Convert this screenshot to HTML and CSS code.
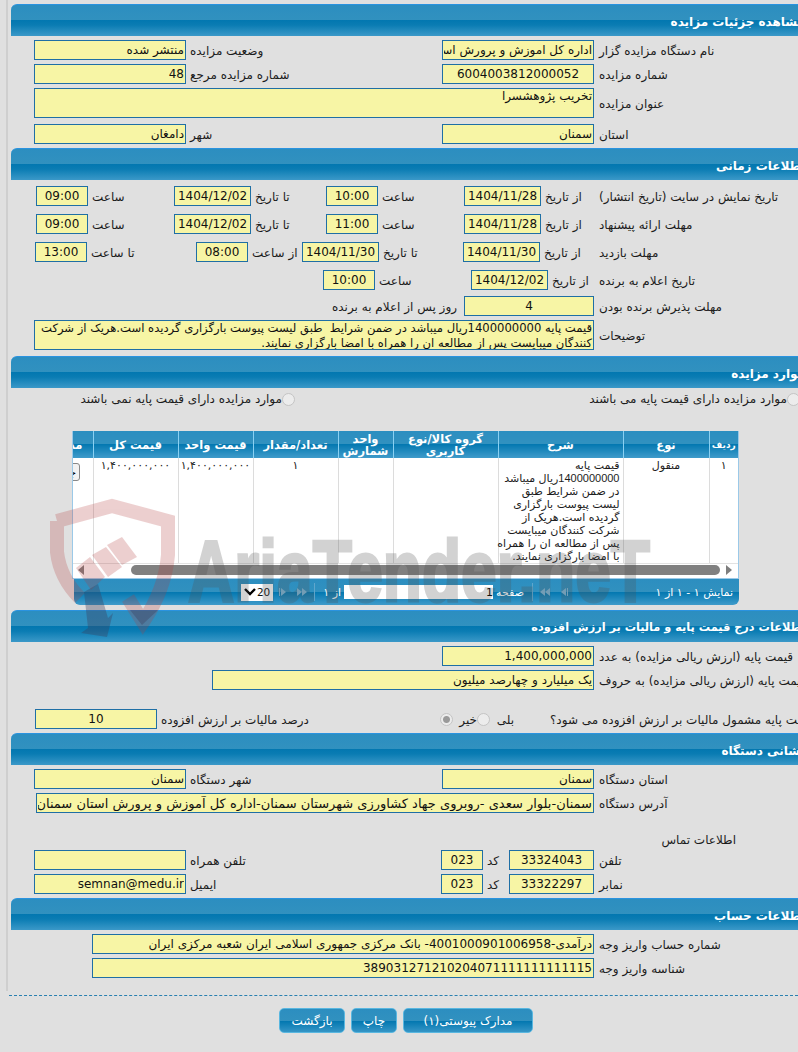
FILE: index.html
```html
<!DOCTYPE html>
<html lang="fa">
<head>
    <meta charset="UTF-8">
    <title>مشاهده جزئیات مزایده</title>
    <link rel="stylesheet" href="styles.css">
</head>
<body>
    <div class="page">
        <div class="section-title">مشاهده جزئیات مزایده</div>
        <div class="section-body">
            <div class="row">
                <label class="lbl main">نام دستگاه مزایده گزار</label>
                <input class="fld w152" readonly value="اداره کل اموزش و پرورش استان سمنان">
                <label class="lbl w256">وضعیت مزایده</label>
                <input class="fld w152" readonly value="منتشر شده">
            </div>
            <div class="row">
                <label class="lbl main">شماره مزایده</label>
                <input class="fld w152 c" readonly value="6004003812000052">
                <label class="lbl w256">شماره مزایده مرجع</label>
                <input class="fld w152" readonly value="48">
            </div>
            <div class="row with-area">
                <label class="lbl main">عنوان مزایده</label>
                <textarea class="fld area w560" readonly>تخریب پژوهشسرا</textarea>
            </div>
            <div class="row">
                <label class="lbl main">استان</label>
                <input class="fld w152" readonly value="سمنان">
                <label class="lbl w256">شهر</label>
                <input class="fld w152" readonly value="دامغان">
            </div>
        </div>

        <div class="section-title">اطلاعات زمانی</div>
        <div class="section-body time">
            <div class="row">
                <label class="lbl main">تاریخ نمایش در سایت (تاریخ انتشار)</label>
                <label class="lbl w53">از تاریخ</label>
                <input class="fld date c" readonly value="1404/11/28">
                <label class="lbl w86">ساعت</label>
                <input class="fld hour c" readonly value="10:00">
                <label class="lbl w75">تا تاریخ</label>
                <input class="fld date c" readonly value="1404/12/02">
                <label class="lbl w86">ساعت</label>
                <input class="fld hour c" readonly value="09:00">
            </div>
            <div class="row">
                <label class="lbl main">مهلت ارائه پیشنهاد</label>
                <label class="lbl w53">از تاریخ</label>
                <input class="fld date c" readonly value="1404/11/28">
                <label class="lbl w86">ساعت</label>
                <input class="fld hour c" readonly value="11:00">
                <label class="lbl w75">تا تاریخ</label>
                <input class="fld date c" readonly value="1404/12/02">
                <label class="lbl w86">ساعت</label>
                <input class="fld hour c" readonly value="09:00">
            </div>
            <div class="row">
                <label class="lbl main">مهلت بازدید</label>
                <label class="lbl w54">از تاریخ</label>
                <input class="fld date c" readonly value="1404/11/30">
                <label class="lbl w84">تا تاریخ</label>
                <input class="fld date c" readonly value="1404/11/30">
                <label class="lbl w54">از ساعت</label>
                <input class="fld hour c" readonly value="08:00">
                <label class="lbl w109">تا ساعت</label>
                <input class="fld hour c" readonly value="13:00">
            </div>
            <div class="row">
                <label class="lbl main">تاریخ اعلام به برنده</label>
                <label class="lbl w46">از تاریخ</label>
                <input class="fld date c" readonly value="1404/12/02">
                <label class="lbl w96">ساعت</label>
                <input class="fld hour c" readonly value="10:00">
            </div>
            <div class="row tight">
                <label class="lbl main">مهلت پذیرش برنده بودن</label>
                <input class="fld w130 c" readonly value="4">
                <span class="note">روز پس از اعلام به برنده</span>
            </div>
            <div class="row with-area">
                <label class="lbl main">توضیحات</label>
                <textarea class="fld area notes w560" readonly>قیمت پایه 1400000000ریال میباشد در ضمن شرایط  طبق لیست پیوست بارگزاری گردیده است.هریک از شرکت
کنندگان میبایست پس از مطالعه ان را همراه با امضا بارگزاری نمایند.</textarea>
            </div>
        </div>

        <div class="section-title">موارد مزایده</div>
        <div class="section-body items">
            <div class="radio-row">
                <div class="radio-item"><span class="radio"></span>موارد مزایده دارای قیمت پایه می باشند</div>
                <div class="radio-item"><span class="radio"></span>موارد مزایده دارای قیمت پایه نمی باشند</div>
            </div>
            <div class="grid-box">
                <table class="grid">
                    <colgroup>
                        <col class="c29"><col class="c86"><col class="c125"><col class="c105"><col class="c55"><col class="c85"><col class="c75"><col class="c85"><col class="c60">
                    </colgroup>
                    <thead>
                        <tr>
                            <th class="first">ردیف</th>
                            <th>نوع</th>
                            <th>شرح</th>
                            <th>گروه کالا/نوع<br>کاربری</th>
                            <th>واحد<br>شمارش</th>
                            <th>تعداد/مقدار</th>
                            <th>قیمت واحد</th>
                            <th>قیمت کل</th>
                            <th class="cut">مدارک</th>
                        </tr>
                    </thead>
                    <tbody>
                        <tr>
                            <td>۱</td>
                            <td>منقول</td>
                            <td class="desc">قیمت پایه<br><span class="num">1400000000</span>ریال میباشد<br>در ضمن شرایط  طبق<br>لیست پیوست بارگزاری<br>گردیده است.هریک از<br>شرکت کنندگان میبایست<br>پس از مطالعه ان را همراه<br>با امضا بارگزاری نمایند.</td>
                            <td></td>
                            <td></td>
                            <td>۱</td>
                            <td>۱,۴۰۰,۰۰۰,۰۰۰</td>
                            <td>۱,۴۰۰,۰۰۰,۰۰۰</td>
                            <td class="cut"><button class="mini">جزئیات</button></td>
                        </tr>
                    </tbody>
                </table>
                <div class="scroll-row">
                    <svg class="arrow" width="6" height="10" viewBox="0 0 6 10"><path d="M0 0 L6 5 L0 10 Z"/></svg>
                    <div class="thumb"></div>
                    <svg class="arrow" width="6" height="10" viewBox="0 0 6 10"><path d="M6 0 L0 5 L6 10 Z"/></svg>
                </div>
            </div>
            <div class="pager">
                <span class="pager-info">نمایش ۱ - ۱ از ۱</span>
                <svg class="pg-icons" width="30" height="8" viewBox="0 0 30 8"><path d="M30 0 V8 H29 V0 Z M28 0 V8 L23 4 Z M12 0 V8 L7 4 Z M7 0 V8 L2 4 Z"/></svg>
                <span class="pg-sep"></span>
                <span class="pg-text">صفحه</span>
                <input class="pg-input" readonly value="1">
                <span class="pg-text">از ۱</span>
                <span class="pg-sep"></span>
                <svg class="pg-icons" width="30" height="8" viewBox="0 0 30 8"><path d="M0 0 V8 H1 V0 Z M2 0 V8 L7 4 Z M18 0 V8 L23 4 Z M23 0 V8 L28 4 Z"/></svg>
                <div class="pg-size">
                    <span>20</span>
                    <svg width="12" height="8" viewBox="0 0 12 8"><path d="M1 1 L6 6 L11 1" fill="none" stroke="#000" stroke-width="2.4"/></svg>
                </div>
            </div>
        </div>

        <div class="section-title narrow">اطلاعات درج قیمت پایه و مالیات بر ارزش افزوده</div>
        <div class="section-body price">
            <div class="row">
                <label class="lbl main">قیمت پایه (ارزش ریالی مزایده) به عدد</label>
                <input class="fld w152" readonly value="1,400,000,000">
            </div>
            <div class="row">
                <label class="lbl main">قیمت پایه (ارزش ریالی مزایده) به حروف</label>
                <input class="fld w382" readonly value="یک میلیارد و چهارصد میلیون">
            </div>
            <div class="row tax">
                <label class="lbl w284">قیمت پایه مشمول مالیات بر ارزش افزوده می شود؟</label>
                <div class="tax-options">
                    <span class="opt">بلی</span><span class="radio"></span>
                    <span class="opt">خیر</span><span class="radio on"></span>
                </div>
                <label class="lbl w283">درصد مالیات بر ارزش افزوده</label>
                <input class="fld w122 c" readonly value="10">
            </div>
        </div>

        <div class="section-title">نشانی دستگاه</div>
        <div class="section-body">
            <div class="row">
                <label class="lbl main">استان دستگاه</label>
                <input class="fld w152" readonly value="سمنان">
                <label class="lbl w256">شهر دستگاه</label>
                <input class="fld w152" readonly value="سمنان">
            </div>
            <div class="row">
                <label class="lbl main">آدرس دستگاه</label>
                <input class="fld w558" readonly value="سمنان-بلوار سعدی -روبروی جهاد کشاورزی شهرستان سمنان-اداره کل آموزش و پرورش استان سمنان">
            </div>
            <div class="contact-title">اطلاعات تماس</div>
            <div class="row">
                <label class="lbl main">تلفن</label>
                <input class="fld w85 c" readonly value="33324043">
                <label class="lbl w26">کد</label>
                <input class="fld w42 c" readonly value="023">
                <label class="lbl w255">تلفن همراه</label>
                <input class="fld w152" readonly value="">
            </div>
            <div class="row">
                <label class="lbl main">نمابر</label>
                <input class="fld w85 c" readonly value="33322297">
                <label class="lbl w26">کد</label>
                <input class="fld w42 c" readonly value="023">
                <label class="lbl w255">ایمیل</label>
                <input class="fld w152" readonly value="semnan@medu.ir">
            </div>
        </div>

        <div class="section-title">اطلاعات حساب</div>
        <div class="section-body">
            <div class="row">
                <label class="lbl main">شماره حساب واریز وجه</label>
                <input class="fld w502" readonly value="درآمدی-4001000901006958- بانک مرکزی جمهوری اسلامی ایران شعبه مرکزی ایران">
            </div>
            <div class="row">
                <label class="lbl main">شناسه واریز وجه</label>
                <input class="fld w502" readonly value="389031271210204071111111111115">
            </div>
        </div>
    </div>

    <div class="divider"></div>

    <div class="actions">
        <button class="btn w130">مدارک پیوستی(۱)</button>
        <button class="btn w46b">چاپ</button>
        <button class="btn w66b">بازگشت</button>
    </div>

    <svg class="watermark" width="798" height="1052" viewBox="0 0 798 1052">
        <g class="wm-red">
            <path class="wm-line" d="M57 521 L112 506 L168 521 V555 Q165 590 143 622 L128 598 M57 521 V552 Q60 578 80 598"/>
            <path d="M107 545 L122 537 L137 557 L122 565 Z M92 555 L106 547 L122 567 L108 577 Z M76 568 L90 557 L105 577 L91 590 Z"/>
        </g>
        <g class="wm-blue">
            <path d="M84 592 L98 584 L108 618 L113 613 L107 637 L81 633 L88 628 Z"/>
            <path d="M130 610 L158 610 L142 625 Z"/>
        </g>
        <text class="wm-text" x="188" y="601" textLength="462" lengthAdjust="spacingAndGlyphs">AriaTender.neT</text>
    </svg>
</body>
</html>
```

FILE: styles.css
```css
* {
    margin: 0;
    padding: 0;
    box-sizing: border-box;
}

html, body {
    height: 1052px;
    overflow: hidden;
}

body {
    position: relative;
    background: #e0e0e0;
    font-family: "DejaVu Sans", sans-serif;
    font-size: 12px;
    color: #1c1c1c;
}

.page {
    direction: rtl;
    width: 824px;
    height: 991px;
    margin-left: 6px;
    padding: 4px 0 0 3px;
    border-left: 2px solid #cfcfcf;
}

.section-title {
    height: 32px;
    padding: 5px 25px 0 0;
    line-height: 24px;
    font-weight: bold;
    color: #fff;
    border-top: 1px solid #2a93e0;
    border-top-left-radius: 6px;
    background: linear-gradient(#2c8ec0 0, #3191bf 15px, #0277b0 15px, #0a7cb3 20px, #3f9bca 32px);
}

.section-title.narrow {
    font-size: 11.3px;
}

.section-body {
    padding-top: 4px;
}

.row {
    display: flex;
    align-items: center;
    margin-bottom: 4px;
}

.row.with-area {
    margin-bottom: 6px;
}

.lbl {
    flex: none;
    padding: 2px 0 0 4px;
    text-align: left;
    white-space: nowrap;
}

.lbl.main { width: 236px; padding-left: 5px; }

.w26 { width: 26px; }
.w46 { width: 46px; }
.w53 { width: 53px; }
.w54 { width: 54px; }
.w75 { width: 75px; }
.w84 { width: 84px; }
.w86 { width: 86px; }
.w96 { width: 96px; }
.w109 { width: 109px; }
.w255 { width: 255px; }
.w256 { width: 256px; }
.w283 { width: 283px; }
.w284 { width: 284px; }

.fld {
    flex: none;
    display: block;
    height: 20px;
    border: 1px solid #1f6fa5;
    background: #f7f5a5;
    padding: 0 1px;
    font-family: "DejaVu Sans", sans-serif;
    font-size: 12px;
    color: #111;
    direction: rtl;
    outline: none;
    border-radius: 0;
}

.fld.c { text-align: center; }
.fld.date { width: 77px; padding: 0; }
.fld.hour { width: 52px; }
.fld.w42 { width: 42px; }
.fld.w85 { width: 85px; }
.fld.w122 { width: 122px; }
.fld.w130 { width: 130px; }
.fld.w152 { width: 152px; }
.fld.w382 { width: 382px; }
.fld.w502 { width: 502px; }
.fld.w558 { width: 558px; font-size: 13px; }
.fld.w560 { width: 560px; }

.area {
    height: 30px;
    resize: none;
    overflow: hidden;
    line-height: 15px;
}

.fld.notes {
    font-size: 11.6px;
}

.time { padding-top: 6px; }
.time .row { margin-bottom: 8px; }
.time .row:nth-child(4) { margin-bottom: 6px; }
.time .row.tight { margin-bottom: 4px; }
.time .row.with-area { margin-bottom: 6px; }

.note {
    padding: 2px 7px 0 0;
    white-space: nowrap;
}

.items { height: 222px; }

.radio-row {
    display: flex;
    height: 14px;
    margin-bottom: 25px;
    padding-right: 30px;
}

.radio-item {
    flex: none;
    display: flex;
    align-items: center;
    width: 505px;
    white-space: nowrap;
}

.radio {
    flex: none;
    display: block;
    width: 13px;
    height: 13px;
    border: 1px solid #c4c4c4;
    border-radius: 50%;
    background: #ececec;
}

.radio.on {
    background: radial-gradient(circle, #9a9a9a 0, #9a9a9a 3px, #ececec 4px);
}

.grid-box {
    width: 667px;
    height: 148px;
    margin-right: 91px;
    border: 1px solid #9bc9e8;
    border-top: 0;
    background: #fff;
    overflow: hidden;
}

.grid {
    table-layout: fixed;
    width: 705px;
    border-collapse: collapse;
}

.c29 { width: 29px; }
.c55 { width: 55px; }
.c60 { width: 60px; }
.c75 { width: 75px; }
.c85 { width: 85px; }
.c86 { width: 86px; }
.c105 { width: 105px; }
.c125 { width: 125px; }

.grid th {
    height: 27px;
    padding: 0;
    font-size: 11.5px;
    line-height: 12px;
    font-weight: bold;
    color: #fff;
    border-left: 1px solid #8ad0f2;
    background: linear-gradient(#2c8ec0 0, #3191bf 13px, #0277b0 13px, #3f9bca 27px);
}

.grid th.first {
    font-size: 9px;
}

.grid td {
    height: 105px;
    padding-top: 1px;
    font-size: 11px;
    line-height: 13px;
    text-align: center;
    vertical-align: top;
    border-left: 1px solid #dcdcdc;
    white-space: nowrap;
}

.grid td.desc {
    padding-right: 3px;
    text-align: right;
}

.num {
    font-family: "Liberation Sans", sans-serif;
}

.grid .cut {
    padding-right: 10px;
    text-align: right;
    overflow: hidden;
}

.grid td.cut { padding: 5px 13px 0 0; }

.mini {
    display: block;
    width: 40px;
    height: 18px;
    border: 1px solid #888;
    border-radius: 3px;
    background: #f2f2f2;
    font-family: "DejaVu Sans", sans-serif;
    font-size: 11px;
}

.scroll-row {
    display: flex;
    align-items: center;
    height: 15px;
    padding: 0 6px 2px 5px;
    border-top: 1px solid #e2e2e2;
}

.arrow { flex: none; fill: #7e7e7e; }

.thumb {
    flex: 1;
    height: 10px;
    margin: 0 6px 0 47px;
    border-radius: 5px;
    background: #808080;
}

.pager {
    display: flex;
    align-items: center;
    width: 665px;
    height: 26px;
    margin-right: 91px;
    color: #fff;
    font-size: 11px;
    border-radius: 0 0 6px 6px;
    background: linear-gradient(#2c8ec0 0, #3191bf 13px, #0277b0 13px, #3f9bca 26px);
}

.pager-info {
    width: 171px;
    padding-right: 6px;
    white-space: nowrap;
}

.pg-icons { flex: none; fill: #7fb8d8; }

.pg-sep {
    flex: none;
    width: 1px;
    height: 18px;
    margin: 0 5px;
    background: #5fa6cc;
}

.pg-text { padding: 0 3px; white-space: nowrap; }

.pg-input {
    width: 149px;
    height: 14px;
    border: 0;
    background: #fff;
    font-family: "DejaVu Sans", sans-serif;
    font-size: 11px;
    text-align: right;
    direction: rtl;
    outline: none;
}

.pg-size {
    flex: none;
    display: flex;
    align-items: center;
    justify-content: space-between;
    width: 32px;
    height: 17px;
    margin-right: 6px;
    padding: 0 3px;
    background: #fff;
    color: #111;
    font-size: 10.5px;
}

.price { height: 91px; }
.price .row:nth-child(2) { margin-bottom: 19px; }

.tax-options {
    flex: none;
    display: flex;
    align-items: center;
    width: 106px;
    padding-right: 32px;
}

.opt { width: 24px; padding-top: 2px; }

.contact-title {
    height: 33px;
    padding: 16px 94px 0 0;
    line-height: 14px;
}

.divider {
    margin: 4px 0 0 9px;
    border-top: 1px dashed #2a80b0;
}

.actions {
    display: flex;
    gap: 6px;
    direction: rtl;
    width: 533px;
    margin-top: 12px;
}

.btn {
    height: 25px;
    border: 1px solid #59b7e0;
    border-radius: 5px;
    color: #fff;
    font-family: "DejaVu Sans", sans-serif;
    font-size: 12px;
    background: linear-gradient(#2c8ec0 0, #3191bf 12px, #0277b0 12px, #3f9bca 25px);
}

.btn.w130 { width: 130px; }
.btn.w46b { width: 46px; }
.btn.w66b { width: 66px; }

.watermark {
    position: absolute;
    left: 0;
    top: 0;
    pointer-events: none;
}

.wm-red { fill: #b43c3c; opacity: 0.24; }
.wm-line { fill: none; stroke: #b43c3c; stroke-width: 14px; }
.wm-blue { fill: #3c3c5a; opacity: 0.35; }

.wm-text {
    font-family: "Liberation Sans", sans-serif;
    font-size: 88px;
    font-weight: bold;
    fill: #505050;
    stroke: #505050;
    stroke-width: 3px;
    opacity: 0.25;
}
```
